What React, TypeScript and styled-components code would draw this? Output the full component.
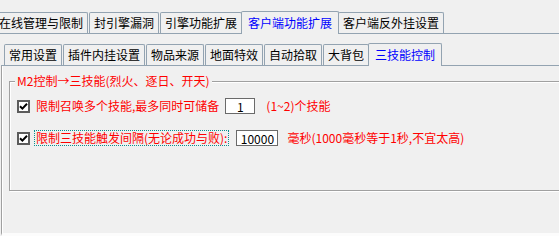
import React from 'react';
import styled, { createGlobalStyle } from 'styled-components';

const GlobalStyle = createGlobalStyle`
  html, body {
    margin: 0;
    padding: 0;
    background: #f0f0f0;
  }
  body {
    font-family: "Noto Sans CJK SC", "Noto Sans", sans-serif;
    font-size: 12px;
  }
`;

const Window = styled.div`
  width: 559px;
  height: 236px;
  overflow: hidden;
  display: flex;
  flex-direction: column;
  background: #f0f0f0;
`;

type StripProps = {
  $top: number;
  $offset?: number;
  $pad?: number;
};

const TabStrip = styled.div<StripProps>`
  display: flex;
  align-items: flex-end;
  flex-shrink: 0;
  height: 22px;
  padding: ${(p) => p.$top}px 0 0 ${(p) => p.$pad ?? 0}px;
  margin-left: ${(p) => p.$offset ?? 0}px;
  border-bottom: 1px solid #93a3b1;
`;

type TabProps = {
  $active?: boolean;
};

const Tab = styled.div<TabProps>`
  position: relative;
  z-index: ${(p) => (p.$active ? 1 : 0)};
  box-sizing: border-box;
  display: flex;
  align-items: center;
  flex-shrink: 0;
  height: ${(p) => (p.$active ? 23 : 21)}px;
  padding: 0 ${(p) => (p.$active ? 6 : 4)}px;
  margin: 0 ${(p) => (p.$active ? -1 : 1)}px ${(p) => (p.$active ? -1 : 0)}px
    ${(p) => (p.$active ? -2 : 0)}px;
  border: 1px solid #93a3b1;
  border-bottom: none;
  border-radius: 2px 2px 0 0;
  background: #f0f0f0;
  color: ${(p) => (p.$active ? '#0000ff' : '#000')};
  line-height: 14px;
  white-space: nowrap;
`;

const OuterPage = styled.div`
  flex: 1;
  display: flex;
  flex-direction: column;
  padding-left: 1px;
`;

const InnerPage = styled.div`
  flex: 1;
  border-left: 1px solid #a0a0a0;
  border-bottom: 3px solid #fcfcfc;
  box-shadow: inset 1px 0 0 #fff;
`;

const GroupBox = styled.fieldset`
  width: 600px;
  margin: 8px 0 0 7px;
  padding: 10px 0 44px 7px;
  border: 1px solid #a0a0a0;
  box-shadow: inset 1px 1px 0 #fff, 1px 1px 0 #fff;
`;

const Legend = styled.legend`
  margin-left: -2px;
  padding: 0 2px;
  background: #f0f0f0;
  color: #ff0000;
  line-height: 14px;
`;

const Row = styled.div`
  display: flex;
  align-items: center;
  height: 16px;

  & + & {
    margin-top: 16px;
  }
`;

const CheckBox = styled.span`
  box-sizing: border-box;
  display: flex;
  align-items: center;
  justify-content: center;
  width: 13px;
  height: 13px;
  border: 2px solid #5c5c5c;
  background: #fff;
`;

const Label = styled.span<{ $focused?: boolean }>`
  box-sizing: border-box;
  height: 16px;
  margin-left: 4px;
  padding: 0 1px;
  border: 1px dotted ${(p) => (p.$focused ? '#0a8f8f' : 'transparent')};
  color: #ff0000;
  line-height: 14px;
  white-space: nowrap;
`;

const NumberBox = styled.input<{ $width: number; $gap: number }>`
  box-sizing: border-box;
  width: ${(p) => p.$width}px;
  height: 16px;
  margin: 0 0 0 ${(p) => p.$gap}px;
  padding: 0;
  border: 1px solid #6a6a6a;
  background: #fff;
  color: #000;
  font: inherit;
  font-size: 12px;
  line-height: 14px;
  text-align: center;
  outline: none;
`;

const Note = styled.span<{ $gap: number }>`
  margin-left: ${(p) => p.$gap}px;
  color: #ff0000;
  line-height: 14px;
  white-space: nowrap;
`;

const Check = () => (
  <CheckBox>
    <svg width="9" height="9" viewBox="0 0 9 9">
      <path d="M1 4.2 L3.4 6.6 L8 1.8" fill="none" stroke="#000" strokeWidth="2" />
    </svg>
  </CheckBox>
);

const topTabs = ['在线管理与限制', '封引擎漏洞', '引擎功能扩展', '客户端功能扩展', '客户端反外挂设置'];
const innerTabs = ['常用设置', '插件内挂设置', '物品来源', '地面特效', '自动拾取', '大背包', '三技能控制'];

export default function App() {
  return (
    <>
      <GlobalStyle />
      <Window>
        <TabStrip $top={11} $offset={-6}>
          {topTabs.map((t) => (
            <Tab key={t} $active={t === '客户端功能扩展'}>
              {t}
            </Tab>
          ))}
        </TabStrip>
        <OuterPage>
          <TabStrip $top={9} $pad={3}>
            {innerTabs.map((t) => (
              <Tab key={t} $active={t === '三技能控制'}>
                {t}
              </Tab>
            ))}
          </TabStrip>
          <InnerPage>
            <GroupBox>
              <Legend>M2控制→三技能(烈火、逐日、开天)</Legend>
              <Row>
                <Check />
                <Label>限制召唤多个技能,最多同时可储备</Label>
                <NumberBox $width={30} $gap={4} value="1" readOnly />
                <Note $gap={11}>(1~2)个技能</Note>
              </Row>
              <Row>
                <Check />
                <Label $focused>限制三技能触发间隔(无论成功与败):</Label>
                <NumberBox $width={42} $gap={7} value="10000" readOnly />
                <Note $gap={9}>毫秒(1000毫秒等于1秒,不宜太高)</Note>
              </Row>
            </GroupBox>
          </InnerPage>
        </OuterPage>
      </Window>
    </>
  );
}
